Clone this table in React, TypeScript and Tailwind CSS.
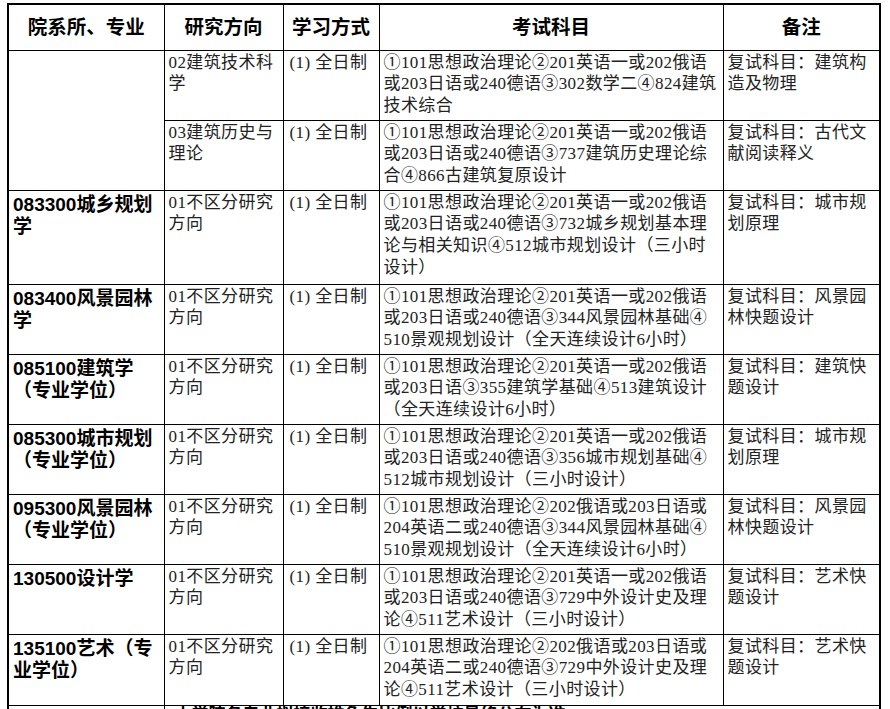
import React from "react";

type Row = {
  c1?: string[];
  c2: string[];
  c4: string[];
  c5: string[];
  h: string;
  skipC1?: boolean;
  span1?: number;
};

const rows: Row[] = [
  {
    c1: [],
    span1: 2,
    c2: ["02建筑技术科", "学"],
    c4: ["①101思想政治理论②201英语一或202俄语", "或203日语或240德语③302数学二④824建筑", "技术综合"],
    c5: ["复试科目：建筑构", "造及物理"],
    h: "h-[70px]",
  },
  {
    skipC1: true,
    c2: ["03建筑历史与", "理论"],
    c4: ["①101思想政治理论②201英语一或202俄语", "或203日语或240德语③737建筑历史理论综", "合④866古建筑复原设计"],
    c5: ["复试科目：古代文", "献阅读释义"],
    h: "h-[70px]",
  },
  {
    c1: ["083300城乡规划", "学"],
    c2: ["01不区分研究", "方向"],
    c4: ["①101思想政治理论②201英语一或202俄语", "或203日语或240德语③732城乡规划基本理", "论与相关知识④512城市规划设计（三小时", "设计）"],
    c5: ["复试科目：城市规", "划原理"],
    h: "h-[94px]",
  },
  {
    c1: ["083400风景园林", "学"],
    c2: ["01不区分研究", "方向"],
    c4: ["①101思想政治理论②201英语一或202俄语", "或203日语或240德语③344风景园林基础④", "510景观规划设计（全天连续设计6小时）"],
    c5: ["复试科目：风景园", "林快题设计"],
    h: "h-[70px]",
  },
  {
    c1: ["085100建筑学", "（专业学位）"],
    c2: ["01不区分研究", "方向"],
    c4: ["①101思想政治理论②201英语一或202俄语", "或203日语③355建筑学基础④513建筑设计", "（全天连续设计6小时）"],
    c5: ["复试科目：建筑快", "题设计"],
    h: "h-[70px]",
  },
  {
    c1: ["085300城市规划", "（专业学位）"],
    c2: ["01不区分研究", "方向"],
    c4: ["①101思想政治理论②201英语一或202俄语", "或203日语或240德语③356城市规划基础④", "512城市规划设计（三小时设计）"],
    c5: ["复试科目：城市规", "划原理"],
    h: "h-[70px]",
  },
  {
    c1: ["095300风景园林", "（专业学位）"],
    c2: ["01不区分研究", "方向"],
    c4: ["①101思想政治理论②202俄语或203日语或", "204英语二或240德语③344风景园林基础④", "510景观规划设计（全天连续设计6小时）"],
    c5: ["复试科目：风景园", "林快题设计"],
    h: "h-[70px]",
  },
  {
    c1: ["130500设计学"],
    c2: ["01不区分研究", "方向"],
    c4: ["①101思想政治理论②201英语一或202俄语", "或203日语或240德语③729中外设计史及理", "论④511艺术设计（三小时设计）"],
    c5: ["复试科目：艺术快", "题设计"],
    h: "h-[70px]",
  },
  {
    c1: ["135100艺术（专", "业学位）"],
    c2: ["01不区分研究", "方向"],
    c4: ["①101思想政治理论②202俄语或203日语或", "204英语二或240德语③729中外设计史及理", "论④511艺术设计（三小时设计）"],
    c5: ["复试科目：艺术快", "题设计"],
    h: "h-[71px]",
  },
];

const bodyCell =
  "border border-black align-top pl-[4px] pt-[1px] text-[17px] leading-[21.7px] tracking-[0.4px] text-[#222] font-[family-name:'Liberation_Serif','Noto_Sans_CJK_SC',serif]";
const boldCell =
  "border border-black align-top pl-[4px] pt-[3px] text-[19px] leading-[22px] font-bold text-black font-[family-name:'Liberation_Sans','Noto_Sans_CJK_SC',sans-serif]";
const headCell =
  "border border-black align-middle text-center text-[19.5px] font-bold text-black font-[family-name:'Liberation_Sans','Noto_Sans_CJK_SC',sans-serif]";

function Lines({ lines }: { lines: string[] }) {
  return (
    <>
      {lines.map((l, i) => (
        <div key={i} className="whitespace-nowrap">
          {l}
        </div>
      ))}
    </>
  );
}

export default function App() {
  return (
    <div className="w-[890px] h-[709px] overflow-hidden bg-white pt-[3px] pl-[7px]">
      <table className="table-fixed border-collapse border-2 border-black w-[874px]">
        <colgroup>
          <col className="w-[156px]" />
          <col className="w-[119px]" />
          <col className="w-[96px]" />
          <col className="w-[344px]" />
          <col className="w-[157px]" />
        </colgroup>
        <thead>
          <tr className="h-[46px]">
            <th className={headCell}>院系所、专业</th>
            <th className={headCell}>研究方向</th>
            <th className={headCell}>学习方式</th>
            <th className={headCell}>考试科目</th>
            <th className={headCell}>备注</th>
          </tr>
        </thead>
        <tbody>
          {rows.map((r, i) => (
            <tr key={i} className={r.h}>
              {!r.skipC1 && (
                <td className={boldCell} rowSpan={r.span1 ?? 1}>
                  <Lines lines={r.c1 ?? []} />
                </td>
              )}
              <td className={bodyCell}>
                <Lines lines={r.c2} />
              </td>
              <td className={bodyCell}>
                <div className="whitespace-nowrap pl-[2px]">(1) 全日制</div>
              </td>
              <td className={bodyCell}>
                <Lines lines={r.c4} />
              </td>
              <td className={bodyCell}>
                <Lines lines={r.c5} />
              </td>
            </tr>
          ))}
          <tr className="h-[70px]">
            <td className={boldCell}></td>
            <td
              colSpan={4}
              className="border border-black align-top pl-[10px] pt-0 text-[17px] leading-[17px] font-bold text-black font-[family-name:'Liberation_Sans','Noto_Sans_CJK_SC',sans-serif]"
            >
              本学院各专业拟接收推免生比例以学校最终公布为准
            </td>
          </tr>
        </tbody>
      </table>
    </div>
  );
}
